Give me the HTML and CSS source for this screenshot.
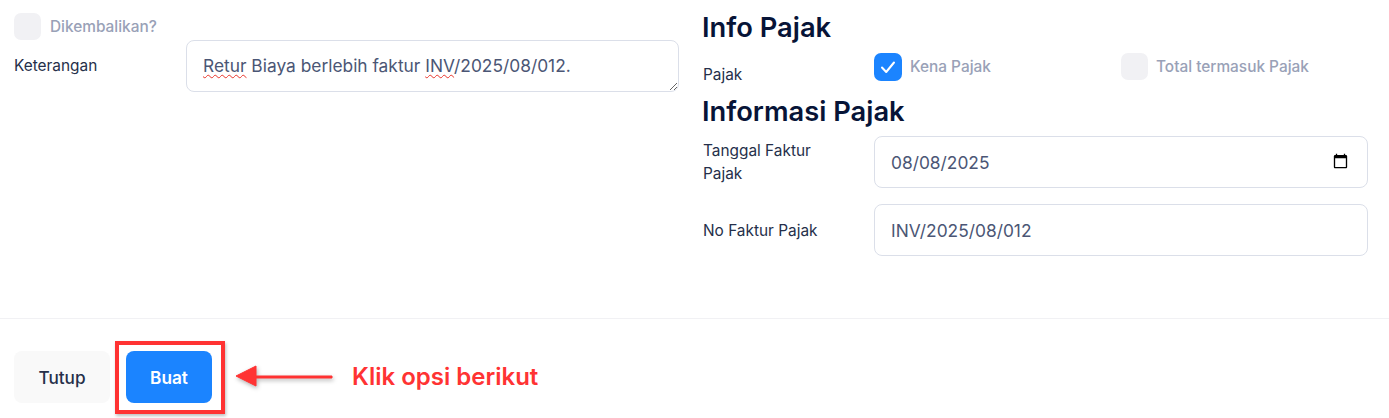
FILE: index.html
```html
<!DOCTYPE html>
<html lang="id">
<head>
    <meta charset="UTF-8">
    <meta name="viewport" content="width=device-width, initial-scale=1.0">
    <title>Buat Retur</title>
    <link rel="stylesheet" href="styles.css">
</head>
<body>

    <div class="form-body">
        <div class="col-left">
            <div class="check-row wide">
                <span class="checkbox"></span>
                <span class="check-label">Dikembalikan?</span>
            </div>
            <div class="note-row">
                <label class="field-label">Keterangan</label>
                <div class="note-box"><span class="typo">Retur</span> Biaya berlebih faktur <span class="typo">INV</span>/2025/08/012.</div>
            </div>
        </div>

        <div class="col-right">
            <h2 class="section-title">Info Pajak</h2>
            <div class="tax-row">
                <span class="tax-label">Pajak</span>
                <div class="check-row tax-check">
                    <span class="checkbox checked">
                        <svg viewBox="0 0 28 28" width="28" height="28" fill="none" stroke="#fff" stroke-width="2" stroke-linecap="round" stroke-linejoin="round"><path d="M8 14.5l4.2 4.5L20 9.5"/></svg>
                    </span>
                    <span class="check-label">Kena Pajak</span>
                </div>
                <div class="check-row tax-check">
                    <span class="checkbox"></span>
                    <span class="check-label">Total termasuk Pajak</span>
                </div>
            </div>
            <h2 class="section-title second">Informasi Pajak</h2>
            <div class="input-row">
                <label class="field-label">Tanggal Faktur Pajak</label>
                <input class="text-input" type="date" value="2025-08-08">
            </div>
            <div class="input-row">
                <label class="field-label">No Faktur Pajak</label>
                <input class="text-input" type="text" value="INV/2025/08/012">
            </div>
        </div>
    </div>

    <div class="footer">
        <button class="btn btn-close">Tutup</button>
        <button class="btn btn-primary">Buat</button>

        <!-- anotasi merah di atas tombol -->
        <span class="mark-box"></span>
        <svg class="mark-arrow" width="104" height="30" viewBox="0 0 104 30">
            <path d="M98 14H22V4L2 14l20 10V16h76z" fill="#ff3333" stroke="#ff3333" stroke-width="1"/>
        </svg>
        <span class="mark-text">Klik opsi berikut</span>
    </div>

</body>
</html>
```

FILE: styles.css
```css
body {
    font-family: Inter, "Noto Sans", sans-serif;
    margin: 0;
    padding: 0;
    background-color: #fff;
    color: #1c1f2b;
    font-size: 15.4px;
}

.form-body {
    display: flex;
    gap: 23px;
    height: 318px;
    padding: 0 22px 0 14px;
    box-sizing: border-box;
}

.col-left {
    width: 665px;
    padding-top: 13px;
}

.col-right {
    flex: 1;
    padding-top: 11px;
}

.check-row {
    display: flex;
    align-items: center;
    gap: 8px;
}

.check-row.wide {
    gap: 9px;
}

.checkbox {
    display: block;
    width: 27px;
    height: 27px;
    flex-shrink: 0;
    background-color: #f1f1f4;
    border-radius: 7px;
}

.checkbox.checked {
    width: 28px;
    height: 28px;
    background-color: #1b84ff;
}

.check-label {
    color: #99a1b7;
    font-size: 15.4px;
    font-weight: 500;
    margin-top: -1px;
}

.field-label {
    font-size: 15.4px;
    line-height: 23px;
    color: #252f4a;
}

.note-row {
    display: flex;
    align-items: flex-start;
}

.note-row .field-label {
    width: 172px;
    padding-top: 14px;
}

.note-box {
    width: 493px;
    height: 52px;
    box-sizing: border-box;
    border: 1px solid #dbdfe9;
    border-radius: 8px;
    padding: 14px 16px 12px;
    font-size: 17.35px;
    line-height: 22px;
    color: #4b5675;
    resize: vertical;
    overflow: auto;
}

.typo {
    text-decoration: underline wavy #e8352b 1.2px;
    text-underline-offset: 2px;
}

.section-title {
    margin: 0;
    font-size: 27.3px;
    line-height: 34px;
    font-weight: 600;
    color: #071437;
}

.section-title.second {
    margin-top: 2px;
}

.tax-row {
    display: flex;
    align-items: flex-start;
    height: 40px;
    margin-top: 8px;
}

.tax-label {
    width: 172px;
    padding: 13px 0 0 1px;
    box-sizing: border-box;
    line-height: 17px;
    color: #252f4a;
}

.tax-check {
    width: 247px;
}

.input-row {
    display: flex;
    align-items: center;
    margin-top: 16px;
}

.section-title + .input-row {
    margin-top: 7px;
}

.input-row .field-label {
    width: 172px;
    flex-shrink: 0;
    padding: 0 40px 0 1px;
    box-sizing: border-box;
}

.text-input {
    flex: 1;
    min-width: 0;
    height: 52px;
    box-sizing: border-box;
    border: 1px solid #dbdfe9;
    border-radius: 8px;
    padding: 0 16px;
    font-family: inherit;
    font-size: 17.35px;
    color: #4b5675;
    background-color: #fff;
}

.text-input::-webkit-datetime-edit-month-field,
.text-input::-webkit-datetime-edit-day-field,
.text-input::-webkit-datetime-edit-year-field {
    padding: 0;
}

.footer {
    position: relative;
    display: flex;
    gap: 16px;
    padding: 32px 14px 15px;
    border-top: 1px solid #f1f1f4;
}

.btn {
    height: 52px;
    border: none;
    border-radius: 8px;
    font-family: inherit;
    font-size: 17.2px;
    cursor: pointer;
}

.btn-close {
    width: 96px;
    background-color: #f9f9f9;
    color: #252f4a;
    font-weight: 500;
}

.btn-primary {
    width: 86px;
    background-color: #1b84ff;
    color: #fff;
    font-weight: 600;
}

.mark-box {
    position: absolute;
    left: 115px;
    top: 22px;
    width: 110px;
    height: 73px;
    box-sizing: border-box;
    border: 4px solid #ff3333;
    box-shadow: 1px 2px 3px rgba(0, 0, 0, 0.25);
}

.mark-arrow {
    position: absolute;
    left: 234px;
    top: 43px;
    filter: drop-shadow(1px 2px 2px rgba(0, 0, 0, 0.3));
}

.mark-text {
    position: absolute;
    left: 352px;
    top: 43px;
    font-size: 24px;
    line-height: 30px;
    font-weight: 600;
    color: #ff3333;
}
```
